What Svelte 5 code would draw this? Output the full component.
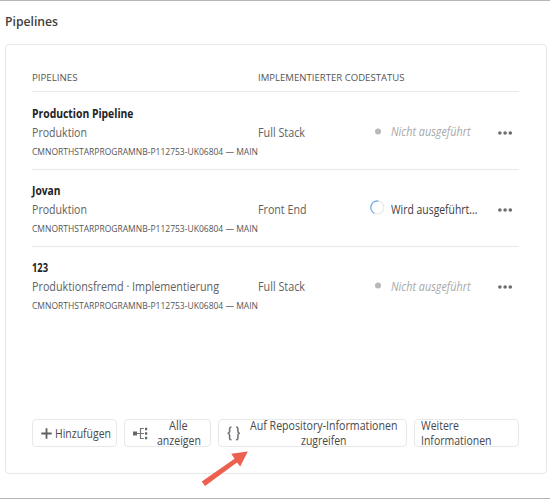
<script>
  const branch = 'CMNORTHSTARPROGRAMNB-P112753-UK06804 — MAIN';
  const pipelines = [
    { name: 'Production Pipeline', nameWidth: 101.5, type: 'Produktion', typeWidth: 55, code: 'Full Stack', codeWidth: 47, running: false },
    { name: 'Jovan', nameWidth: 28.5, type: 'Produktion', typeWidth: 55, code: 'Front End', codeWidth: 48.5, running: true },
    { name: '123', nameWidth: 16, type: 'Produktionsfremd · Implementierung', typeWidth: 187, code: 'Full Stack', codeWidth: 47, running: false }
  ];

  // Condenses or widens a label so that it fills the given width.
  function fit(node, width) {
    node.style.transform = `scaleX(${width / node.getBoundingClientRect().width})`;
  }
</script>

{#snippet label(text, width)}
  <span class="label" style="width: {width}px"><span class="glyphs" use:fit={width}>{text}</span></span>
{/snippet}

<div class="page">
  <h1>{@render label('Pipelines', 53)}</h1>
  <section class="card">
    <div class="head">
      <div class="c1">{@render label('PIPELINES', 45.5)}</div>
      <div>{@render label('IMPLEMENTIERTER CODESTATUS', 146.5)}</div>
    </div>
    {#each pipelines as p}
      <div class="row">
        <div class="c1">
          <div class="name">{@render label(p.name, p.nameWidth)}</div>
          <div class="type">{@render label(p.type, p.typeWidth)}</div>
          <div class="branch">{@render label(branch, 226)}</div>
        </div>
        <div class="code">{@render label(p.code, p.codeWidth)}</div>
        <div class="state" class:running={p.running}>
          {#if p.running}
            <svg width="16" height="16" viewBox="0 0 16 16" fill="none">
              <circle cx="9.3" cy="7.5" r="6.5" stroke="#e8e8e8" stroke-width="1.1" />
              <path d="M10.4 1.1A6.5 6.5 0 0 0 6.4 13.3" stroke="#78afef" stroke-width="1.4" />
            </svg>
            {@render label('Wird ausgeführt...', 86.5)}
          {:else}
            <svg width="16" height="16" viewBox="0 0 16 16"><circle cx="10" cy="8.4" r="3" fill="#b8b8b8" /></svg>
            {@render label('Nicht ausgeführt', 79.5)}
          {/if}
        </div>
        <svg class="more" width="16" height="6" viewBox="0 0 16 6" fill="#6c6c6c">
          <circle cx="1.9" cy="3" r="1.8" /><circle cx="7.1" cy="3" r="1.8" /><circle cx="12.3" cy="3" r="1.8" />
        </svg>
      </div>
    {/each}
    <div class="actions">
      <button class="add">
        <svg width="11" height="11" viewBox="0 0 11 11"><path d="M5.5 .3v10.4M.3 5.5h10.4" stroke="#606060" stroke-width="1.8" /></svg>
        {@render label('Hinzufügen', 56)}
      </button>
      <button class="all">
        <svg width="15" height="13" viewBox="0 0 15 13">
          <path d="M0 4.5h4v4H0zM12 .8h2.2v2.4H12zM12 5.3h2.2v2.4H12zM12 9.8h2.2v2.4H12z" fill="#666" />
          <path d="M4 6.5h7M10.8 1.5H7.5v10h3.3" fill="none" stroke="#777" stroke-width="1.2" />
        </svg>
        <span class="lines"><span>{@render label('Alle', 18.5)}</span><span>{@render label('anzeigen', 44)}</span></span>
      </button>
      <button class="repo">
        <svg width="14" height="15" viewBox="0 0 14 15" fill="none" stroke="#757575" stroke-width="1.6">
          <path d="M4.5 1H4Q2.6 1 2.6 2.7V5.4Q2.6 7 .7 7.3Q2.6 7.6 2.6 9.2V12Q2.6 13.7 4 13.7H4.5" />
          <path d="M9 1h.5Q10.9 1 10.9 2.7V5.4Q10.9 7 12.8 7.3Q10.9 7.6 10.9 9.2V12Q10.9 13.7 9.5 13.7H9" />
        </svg>
        <span class="lines"><span>{@render label('Auf Repository-Informationen', 147.5)}</span><span>{@render label('zugreifen', 45.5)}</span></span>
      </button>
      <button class="info">
        <span class="lines"><span>{@render label('Weitere', 38)}</span><span>{@render label('Informationen', 70.5)}</span></span>
      </button>
    </div>
  </section>
  <svg class="arrow" width="50" height="38" viewBox="0 0 50 38">
    <path d="M47.8 1.5L40.2 16.5L37 12.5L5 36L1.8 31.6L34.5 8.7L31.3 3.8Z" fill="#eb604f" />
  </svg>
</div>

<style>
  .page {
    box-sizing: border-box; position: relative; width: 550px; height: 499px;
    padding: 10px 3px 0 5px; background: #fff; border-top: 1px solid #b5b5b5; border-bottom: 1px solid #b5b5b5;
    font-family: 'Open Sans', 'Noto Sans', sans-serif; font-size: 12.3px; color: #626262; white-space: nowrap;
  }
  .label { display: inline-block; vertical-align: top; }
  .glyphs { display: inline-block; vertical-align: top; transform-origin: 0 50%; }
  h1 { margin: 0 0 13px; height: 20px; line-height: 20px; font-size: 13.3px; font-weight: 600; color: #404040; }
  .card { box-sizing: border-box; width: 542px; height: 430px; border: 1px solid #e8e8e8; border-radius: 4px; padding: 26px 27px 0 26px; }
  .head { display: flex; height: 20px; line-height: 14px; font-size: 9.7px; border-bottom: 1px solid #e8e8e8; color: #555; }
  .c1 { width: 226px; flex: none; }
  .row { display: flex; height: 76px; border-bottom: 1px solid #e8e8e8; }
  .row:nth-child(2) { padding-top: 1px; }
  .row:nth-child(4) { border-color: transparent; }
  .name { margin-top: 12px; height: 19px; line-height: 18px; font-weight: 700; color: #222; }
  .type { height: 19px; line-height: 18px; }
  .branch { height: 18px; line-height: 18px; font-size: 9.7px; color: #555; }
  .row:nth-child(4) .branch { margin-top: -1px; }
  .row:nth-child(4) .type { height: 20px; }
  .code { width: 110px; padding-top: 31px; line-height: 18px; }
  .state { display: flex; width: 130px; padding-top: 30px; line-height: 18px; font-style: italic; color: #a8a8a8; }
  .state svg { flex: none; margin-right: 7px; }
  .running { padding-top: 31px; font-style: normal; color: #3c3c3c; }
  .running svg { margin-top: -1px; }
  .row:nth-child(4) .state { padding-top: 31px; }
  .row:nth-child(4) .state svg { margin-top: -1px; }
  .more { margin-top: 37px; flex: none; }
  .row:nth-child(4) .more { margin-top: 36.5px; }
  .actions { display: flex; gap: 7px; margin-top: 95px; height: 28px; }
  button { box-sizing: border-box; flex: none; height: 28px; margin: 0; padding: 0; display: flex; align-items: center; background: #fff; border: 1px solid #e8e8e8; border-radius: 4px; font: inherit; line-height: 14px; color: #484848; white-space: nowrap; }
  button svg { flex: none; }
  .lines { display: flex; flex-direction: column; align-items: center; gap: 1px; }
  .lines > span { height: 14px; }
  .add { width: 85px; padding-left: 8px; gap: 2.5px; }
  .add .label { padding-top: 1px; }
  .all { width: 87px; padding-left: 8px; gap: 8.5px; }
  .repo { width: 189px; padding-left: 8px; gap: 8.5px; }
  .info { width: 105px; padding-left: 6px; }
  .info .lines { align-items: flex-start; }
  .arrow { position: absolute; left: 199.5px; top: 449px; }
</style>
